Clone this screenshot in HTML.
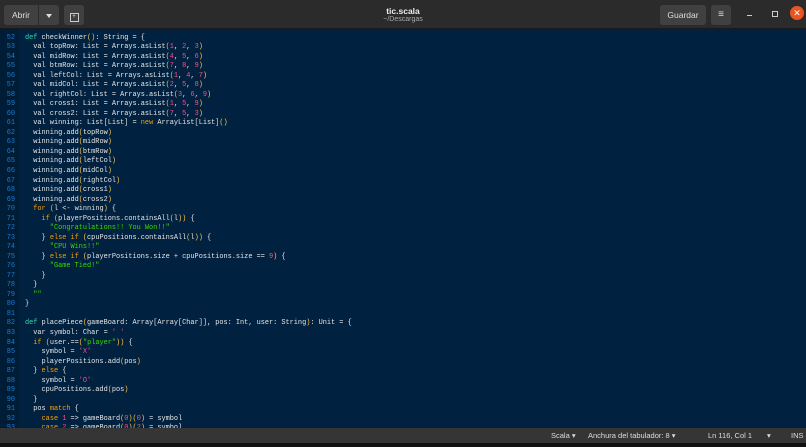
<!DOCTYPE html>
<html><head><meta charset="utf-8"><style>
body{margin:0;width:806px;height:447px;overflow:hidden;background:#001b33;font-family:"Liberation Sans",sans-serif}
.hb{position:absolute;left:0;top:0;width:806px;height:29px;background:#2b2b2b;border-bottom:1px solid #1a1a1a;box-sizing:border-box}
.btn{position:absolute;top:5px;height:20px;background:#404040;border-radius:3px;color:#ddd;font-size:8.5px;line-height:20px;text-align:center}
.ed{position:absolute;left:0;top:29px;width:806px;height:399px;overflow:hidden;background:#002240}
.gut{position:absolute;left:0;top:0;width:19px;height:399px;background:#001d38}
pre{position:absolute;margin:0;top:-5px;font-family:"Liberation Mono",monospace;font-size:6.9px;line-height:9.53px;color:#e6e6e6}
.ln{left:0;width:15px;text-align:right;color:#1a7ad0}
.code{left:25px}
.k{color:#ff9d00}.d{color:#3ad8b0}.n{color:#ff4c8c}.s{color:#3ad900}.p{color:#ffc040}
.sb{position:absolute;left:0;top:428px;width:806px;height:15px;background:#353535;color:#ddd;font-size:7.5px;line-height:15px}
.sb span{position:absolute}
.bot{position:absolute;left:0;top:443px;width:806px;height:4px;background:#111}
</style></head><body>
<div class="hb">
<div class="btn" style="left:4px;width:34px;border-radius:3px 0 0 3px">Abrir</div>
<div class="btn" style="left:39px;width:20px;border-radius:0 3px 3px 0"><span style="display:inline-block;border:3px solid transparent;border-top:4px solid #ddd;margin-top:9px"></span></div>
<div class="btn" style="left:64px;width:20px"><span style="display:inline-block;width:7px;height:7px;border:1px solid #ccc;margin-top:6px;font-size:6px;line-height:7px">+</span></div>
<div style="position:absolute;left:0;width:806px;top:6px;text-align:center;color:#eee;font-size:8.5px;font-weight:bold">tic.scala</div>
<div style="position:absolute;left:0;width:806px;top:16px;text-align:center;color:#aaa;font-size:7px">~/Descargas</div>
<div class="btn" style="left:660px;width:46px">Guardar</div>
<div class="btn" style="left:711px;width:20px;font-size:10px">≡</div>
<div style="position:absolute;left:747px;top:15px;width:5px;height:1px;background:#ccc"></div>
<div style="position:absolute;left:772px;top:11px;width:4px;height:4px;border:1px solid #ccc"></div>
<div style="position:absolute;left:790px;top:6px;width:14px;height:14px;border-radius:50%;background:#e95420;color:#fff;font-size:9px;line-height:14px;text-align:center">✕</div>
</div>
<div class="ed"><div class="gut"></div>
<pre class="ln">51
52
53
54
55
56
57
58
59
60
61
62
63
64
65
66
67
68
69
70
71
72
73
74
75
76
77
78
79
80
81
82
83
84
85
86
87
88
89
90
91
92
93</pre>
<pre class="code"> 
<span class="d">def</span> checkWinner<span class="p">()</span>: String = {
  val topRow: List = Arrays.asList<span class="p">(</span><span class="n">1</span>, <span class="n">2</span>, <span class="n">3</span><span class="p">)</span>
  val midRow: List = Arrays.asList<span class="p">(</span><span class="n">4</span>, <span class="n">5</span>, <span class="n">6</span><span class="p">)</span>
  val btmRow: List = Arrays.asList<span class="p">(</span><span class="n">7</span>, <span class="n">8</span>, <span class="n">9</span><span class="p">)</span>
  val leftCol: List = Arrays.asList<span class="p">(</span><span class="n">1</span>, <span class="n">4</span>, <span class="n">7</span><span class="p">)</span>
  val midCol: List = Arrays.asList<span class="p">(</span><span class="n">2</span>, <span class="n">5</span>, <span class="n">8</span><span class="p">)</span>
  val rightCol: List = Arrays.asList<span class="p">(</span><span class="n">3</span>, <span class="n">6</span>, <span class="n">9</span><span class="p">)</span>
  val cross1: List = Arrays.asList<span class="p">(</span><span class="n">1</span>, <span class="n">5</span>, <span class="n">9</span><span class="p">)</span>
  val cross2: List = Arrays.asList<span class="p">(</span><span class="n">7</span>, <span class="n">5</span>, <span class="n">3</span><span class="p">)</span>
  val winning: List[List] = <span class="k">new</span> ArrayList[List]<span class="p">()</span>
  winning.add<span class="p">(</span>topRow<span class="p">)</span>
  winning.add<span class="p">(</span>midRow<span class="p">)</span>
  winning.add<span class="p">(</span>btmRow<span class="p">)</span>
  winning.add<span class="p">(</span>leftCol<span class="p">)</span>
  winning.add<span class="p">(</span>midCol<span class="p">)</span>
  winning.add<span class="p">(</span>rightCol<span class="p">)</span>
  winning.add<span class="p">(</span>cross1<span class="p">)</span>
  winning.add<span class="p">(</span>cross2<span class="p">)</span>
  <span class="k">for</span> <span class="p">(</span>l &lt;- winning<span class="p">)</span> {
    <span class="k">if</span> <span class="p">(</span>playerPositions.containsAll<span class="p">(</span>l<span class="p">))</span> {
      <span class="s">"Congratulations!! You Won!!"</span>
    } <span class="k">else if</span> <span class="p">(</span>cpuPositions.containsAll<span class="p">(</span>l<span class="p">))</span> {
      <span class="s">"CPU Wins!!"</span>
    } <span class="k">else if</span> <span class="p">(</span>playerPositions.size + cpuPositions.size == <span class="n">9</span><span class="p">)</span> {
      <span class="s">"Game Tied!"</span>
    }
  }
  <span class="s">""</span>
}

<span class="d">def</span> placePiece<span class="p">(</span>gameBoard: Array[Array[Char]], pos: Int, user: String<span class="p">)</span>: Unit = {
  var symbol: Char = <span class="n">' '</span>
  <span class="k">if</span> <span class="p">(</span>user.==<span class="p">(</span><span class="s">"player"</span><span class="p">))</span> {
    symbol = <span class="n">'X'</span>
    playerPositions.add<span class="p">(</span>pos<span class="p">)</span>
  } <span class="k">else</span> {
    symbol = <span class="n">'O'</span>
    cpuPositions.add<span class="p">(</span>pos<span class="p">)</span>
  }
  pos <span class="k">match</span> {
    <span class="k">case</span> <span class="n">1</span> =&gt; gameBoard<span class="p">(</span><span class="n">0</span><span class="p">)(</span><span class="n">0</span><span class="p">)</span> = symbol
    <span class="k">case</span> <span class="n">2</span> =&gt; gameBoard<span class="p">(</span><span class="n">0</span><span class="p">)(</span><span class="n">2</span><span class="p">)</span> = symbol</pre>
</div>
<div class="sb">
<span style="left:551px">Scala ▾</span>
<span style="left:588px">Anchura del tabulador: 8 ▾</span>
<span style="left:708px">Ln 116, Col 1</span>
<span style="left:767px">▾</span>
<span style="left:791px">INS</span>
</div>
<div class="bot"></div>
</body></html>
